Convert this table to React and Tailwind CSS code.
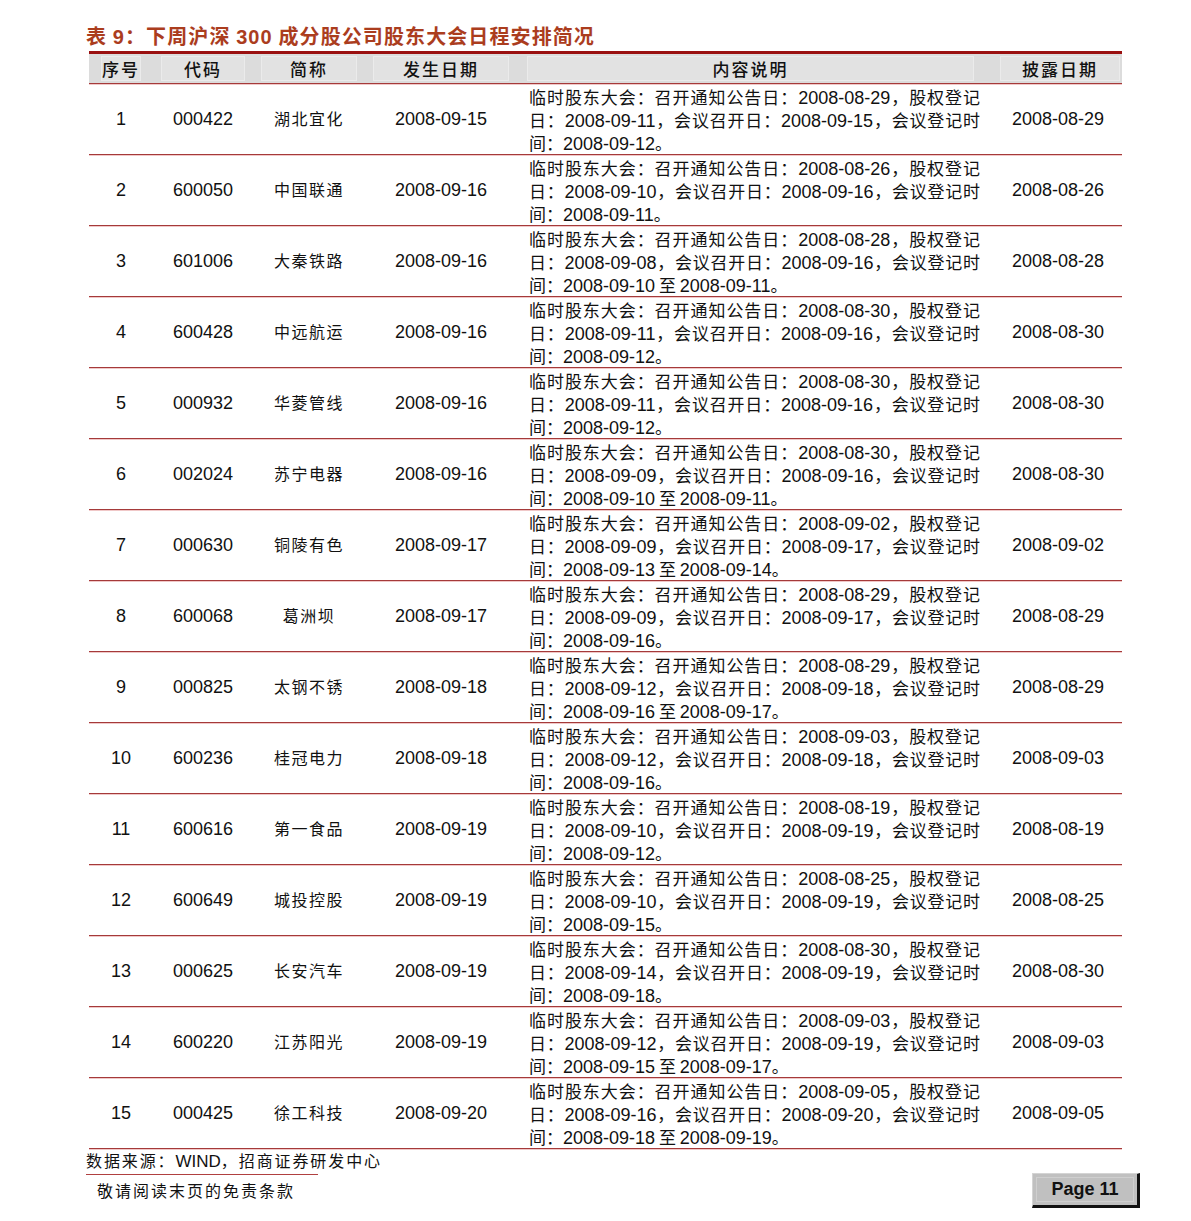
import React from "react";

const rows = [
  ["1", "000422", "湖北宜化", "2008-09-15", "2008-08-29", "2008-09-11", "2008-09-15", "2008-09-12", "2008-08-29"],
  ["2", "600050", "中国联通", "2008-09-16", "2008-08-26", "2008-09-10", "2008-09-16", "2008-09-11", "2008-08-26"],
  ["3", "601006", "大秦铁路", "2008-09-16", "2008-08-28", "2008-09-08", "2008-09-16", "2008-09-10 至 2008-09-11", "2008-08-28"],
  ["4", "600428", "中远航运", "2008-09-16", "2008-08-30", "2008-09-11", "2008-09-16", "2008-09-12", "2008-08-30"],
  ["5", "000932", "华菱管线", "2008-09-16", "2008-08-30", "2008-09-11", "2008-09-16", "2008-09-12", "2008-08-30"],
  ["6", "002024", "苏宁电器", "2008-09-16", "2008-08-30", "2008-09-09", "2008-09-16", "2008-09-10 至 2008-09-11", "2008-08-30"],
  ["7", "000630", "铜陵有色", "2008-09-17", "2008-09-02", "2008-09-09", "2008-09-17", "2008-09-13 至 2008-09-14", "2008-09-02"],
  ["8", "600068", "葛洲坝", "2008-09-17", "2008-08-29", "2008-09-09", "2008-09-17", "2008-09-16", "2008-08-29"],
  ["9", "000825", "太钢不锈", "2008-09-18", "2008-08-29", "2008-09-12", "2008-09-18", "2008-09-16 至 2008-09-17", "2008-08-29"],
  ["10", "600236", "桂冠电力", "2008-09-18", "2008-09-03", "2008-09-12", "2008-09-18", "2008-09-16", "2008-09-03"],
  ["11", "600616", "第一食品", "2008-09-19", "2008-08-19", "2008-09-10", "2008-09-19", "2008-09-12", "2008-08-19"],
  ["12", "600649", "城投控股", "2008-09-19", "2008-08-25", "2008-09-10", "2008-09-19", "2008-09-15", "2008-08-25"],
  ["13", "000625", "长安汽车", "2008-09-19", "2008-08-30", "2008-09-14", "2008-09-19", "2008-09-18", "2008-08-30"],
  ["14", "600220", "江苏阳光", "2008-09-19", "2008-09-03", "2008-09-12", "2008-09-19", "2008-09-15 至 2008-09-17", "2008-09-03"],
  ["15", "000425", "徐工科技", "2008-09-20", "2008-09-05", "2008-09-16", "2008-09-20", "2008-09-18 至 2008-09-19", "2008-09-05"],
];

const CJK = { fontFamily: '"Noto Sans CJK SC", "Liberation Sans", sans-serif' };
const LIB = { fontFamily: '"Liberation Sans", Arial, sans-serif' };

function Num({ children }) {
  return (
    <span className="text-[18px] tracking-normal" style={LIB}>
      {children}
    </span>
  );
}

function Mixed({ text }) {
  const parts = text.split(/([0-9][0-9-]*)/);
  return parts.map((p, i) =>
    /^[0-9]/.test(p) ? <Num key={i}>{p}</Num> : <span key={i}>{p}</span>
  );
}

const grid = "grid grid-cols-[64px_100px_112px_152px_477px_128px]";

function HeadCell({ children, className = "" }) {
  return (
    <div className={"flex items-stretch px-[8px] py-[2px] " + className}>
      <div className="flex-1 flex items-center justify-center bg-[#e2e2e2] border border-[#ebebeb] text-[17px] leading-[20px] tracking-[2px] text-[#111] font-medium">
        {children}
      </div>
    </div>
  );
}

function NumCell({ children }) {
  return (
    <div className="text-center text-[18px] leading-[22px] text-[#111]" style={LIB}>
      {children}
    </div>
  );
}

export default function App() {
  return (
    <div className="w-[1191px] min-h-[1221px] bg-white text-black" style={CJK}>
      <div className="pl-[86px] pt-[22px] h-[51px] text-[20px] leading-[28px] font-bold text-[#ab3d1e] tracking-[1.1px] whitespace-nowrap">
        表 <span style={LIB}>9</span>：下周沪深 <span style={LIB}>300</span> 成分股公司股东大会日程安排简况
      </div>

      <div className="ml-[89px] w-[1033px] border-t-[3px] border-[#9a1010]">
        <div className={grid + " h-[30px] bg-[#dcdcdc] border-b border-[#a53a3a] shadow-[0_1px_0_#f0c8c8]"}>
          <HeadCell className="px-[12px]">序号</HeadCell>
          <HeadCell>代码</HeadCell>
          <HeadCell>简称</HeadCell>
          <HeadCell>发生日期</HeadCell>
          <HeadCell className="pl-[10px] pr-[20px]">内容说明</HeadCell>
          <HeadCell className="pl-[6px] pr-[2px]">披露日期</HeadCell>
        </div>

        {rows.map((r) => (
          <div
            key={r[0]}
            className={grid + " h-[71px] items-center border-b border-[#a53a3a] shadow-[0_1px_0_#f0c8c8]"}
          >
            <NumCell>{r[0]}</NumCell>
            <NumCell>{r[1]}</NumCell>
            <div className="text-center text-[16px] leading-[20px] tracking-[1.5px] text-[#111] -translate-y-[1px]">{r[2]}</div>
            <NumCell>{r[3]}</NumCell>
            <div className="pl-[12px] pr-[14px] text-[17px] leading-[23px] text-[#111]">
              <div className="h-[23px] whitespace-nowrap text-justify [text-align-last:justify]">
                <Mixed text={`临时股东大会：召开通知公告日：${r[4]}，股权登记`} />
              </div>
              <div className="h-[23px] whitespace-nowrap text-justify [text-align-last:justify]">
                <Mixed text={`日：${r[5]}，会议召开日：${r[6]}，会议登记时`} />
              </div>
              <div className="h-[23px] whitespace-pre">
                <Mixed text={`间：${r[7]}。`} />
              </div>
            </div>
            <NumCell>{r[8]}</NumCell>
          </div>
        ))}
      </div>

      <div className="pl-[86px] pt-[1px]">
        <div className="text-[16px] leading-[21px] tracking-[1.9px] text-[#111] whitespace-nowrap">
          数据来源：<span className="text-[17px] tracking-normal" style={LIB}>WIND</span>，招商证券研发中心
        </div>
        <div className="w-[232px] h-px bg-[#b04040] mt-[2px]"></div>
      </div>

      <div className="flex items-start justify-between pl-[97px] pr-[51px]">
        <div className="pt-[4px] text-[16px] leading-[22px] tracking-[2px] text-[#111]">敬请阅读末页的免责条款</div>
        <div className="-mt-[2px] w-[108px] h-[35px] bg-[#c0c0c0] border-t border-l border-[#d4d4d4] border-r-[3px] border-b-[3px] border-r-[#111] border-b-[#111] p-[3px]">
          <div className="h-full border border-[#cfcfcf] flex items-center justify-center text-[18px] font-bold text-[#111]" style={LIB}>
            Page 11
          </div>
        </div>
      </div>
    </div>
  );
}
